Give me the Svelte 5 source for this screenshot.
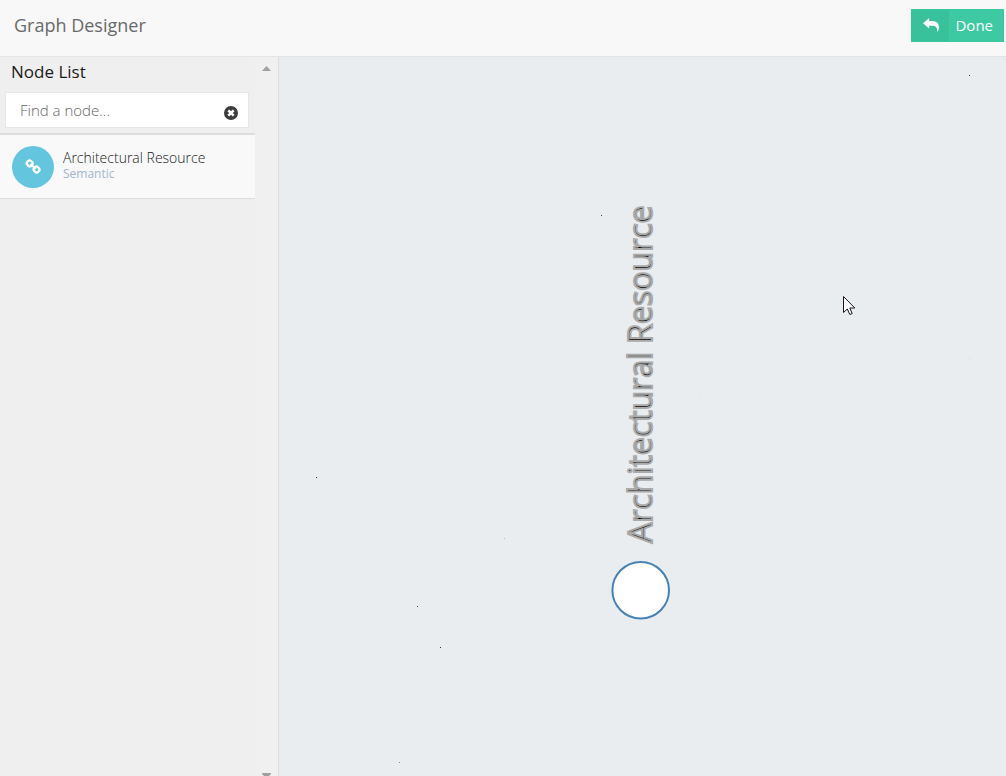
<script>
  const nodes = [{ title: 'Architectural Resource', kind: 'Semantic' }];
  const specks = [
    [690, 18, '#444'],
    [322, 158, '#444'],
    [37, 420, '#333'],
    [138, 549, '#444'],
    [161, 590, '#333'],
    [120, 705, '#888'],
    [225, 481, '#e8b870'],
    [690, 301, '#d9dcde'],
    [420, 336, '#d9dfe2'],
    [126, 125, '#d9dfe2'],
    [463, 709, '#d9dfe2']
  ];
  let query = $state('');
  const shown = $derived(nodes.filter((n) => n.title.toLowerCase().includes(query.toLowerCase())));
</script>

<div class="page">
  <header>
    <h1>Graph Designer</h1>
    <button class="done" type="button">
      <span class="done-icon">
        <svg width="16" height="14" viewBox="0 0 16 14" aria-hidden="true">
          <path fill="#fff" d="M0 5.200 6.200 0v3.100h2.600C13.400 3.100 16 5.300 16 9.200c0 1.700-.5 3.100-1.300 4.300-.3.400-.7.300-.6-.2.500-3.600-1.200-5.500-5.300-5.500H6.200v2.800z" />
        </svg>
      </span>
      <span class="done-text">Done</span>
    </button>
  </header>
  <main>
    <aside>
      <div class="list">
        <h2>Node List</h2>
        <div class="search">
          <input type="text" placeholder="Find a node..." aria-label="Find a node" bind:value={query} />
          <button class="clear" type="button" aria-label="Clear search" onclick={() => (query = '')}>
            <svg width="14" height="14" viewBox="0 0 14 14" aria-hidden="true">
              <circle cx="7" cy="7" r="7" fill="#3c3c3c" />
              <path d="M4.300 4.300l5.400 5.400m0-5.400l-5.400 5.400" stroke="#fff" stroke-width="2.600" />
            </svg>
          </button>
        </div>
        <ul>
          {#each shown as node}
            <li>
              <span class="badge">
                <svg width="16" height="16" viewBox="0 0 16 16" fill="none" stroke="#fff" stroke-width="2.300" aria-hidden="true">
                  <rect x="1.900" y="1.800" width="5.600" height="5.200" rx="2.300" transform="rotate(45 4.700 4.400)" />
                  <rect x="8.700" y="7.900" width="5.600" height="5.200" rx="2.300" transform="rotate(45 11.500 10.500)" />
                  <path d="M6 5.700l4.200 3.600" stroke-linecap="round" stroke-width="2" />
                </svg>
              </span>
              <span class="label">
                <span class="title">{node.title}</span>
                <span class="kind">{node.kind}</span>
              </span>
            </li>
          {/each}
        </ul>
      </div>
      <div class="scroll" aria-hidden="true">
        <svg width="9" height="5" viewBox="0 0 9 5"><path d="M0 5 4.500 0 9 5z" fill="#a0a0a0" /></svg>
        <svg class="down" width="9" height="5" viewBox="0 0 9 5"><path d="M0 0h9v1L5 5H4L0 1z" fill="#a0a0a0" /></svg>
      </div>
    </aside>
    <section class="canvas">
      <svg class="graph" role="img" aria-label="Graph">
        {#each specks as [x, y, color]}
          <rect {x} {y} width="1" height="1" fill={color} />
        {/each}
        <circle cx="361.700" cy="533.300" r="28.300" fill="#fff" stroke="#4682b4" stroke-width="2" />
        <text class="node-text" transform="translate(373 486) rotate(-90)">Architectural Resource</text>
        <path
          transform="translate(564 239)"
          d="M.5.500v16l3.800-3.500 2.500 5.500 2.400-1-2.400-5.500h5z"
          fill="#fff"
          stroke="#15151f"
          stroke-width="1"
        />
      </svg>
    </section>
  </main>
</div>

<style>
  :global(body) {
    margin: 0;
  }
  .page {
    display: flex;
    flex-direction: column;
    height: 100vh;
    overflow: hidden;
    font-family: 'Open Sans', sans-serif;
    color: #676a6c;
    background: #efefef;
  }
  header {
    display: flex;
    align-items: center;
    justify-content: space-between;
    box-sizing: border-box;
    height: 57px;
    padding: 0 2px 6px 14px;
    background: #f8f8f8;
    border-bottom: 1px solid #e5e5e5;
  }
  h1 {
    margin: 0;
    font-size: 18px;
    font-weight: 400;
    line-height: 24px;
  }
  button {
    font-family: inherit;
    border: 0;
    padding: 0;
    cursor: pointer;
  }
  .done {
    display: flex;
    height: 33px;
    border: 1px solid #37c89c;
    background: #3dcaa3;
    color: #fff;
    font-size: 15px;
  }
  .done-icon {
    display: flex;
    align-items: center;
    justify-content: center;
    width: 37px;
    height: 31px;
    background: #39c19b;
  }
  .done-text {
    padding: 0 10px 0 6px;
    line-height: 31px;
  }
  main {
    display: flex;
    flex: 1;
    min-height: 0;
  }
  aside {
    display: flex;
    box-sizing: border-box;
    width: 279px;
    flex: none;
    border-right: 1px solid #dcdcdc;
  }
  .list {
    flex: 1;
    min-width: 0;
  }
  h2 {
    margin: 0;
    padding: 3px 11px 8px;
    font-size: 17px;
    font-weight: 400;
    line-height: 24px;
    color: #1a1a1a;
  }
  .search {
    display: flex;
    align-items: center;
    box-sizing: border-box;
    height: 36px;
    margin: 0 6px 5px 5px;
    padding-right: 10px;
    background: #fff;
    border: 1px solid #e5e6e7;
  }
  input {
    flex: 1;
    min-width: 0;
    padding: 0 14px;
    border: 0;
    outline: 0;
    background: none;
    font: 300 15px 'Open Sans', sans-serif;
    color: #555;
  }
  input::placeholder {
    color: #666;
    opacity: 1;
  }
  .clear {
    display: flex;
    padding-top: 6px;
    background: none;
  }
  ul {
    margin: 0;
    padding: 0;
    list-style: none;
    border-top: 2px solid #dedede;
  }
  li {
    display: flex;
    align-items: center;
    gap: 9px;
    box-sizing: border-box;
    height: 64px;
    padding-left: 12px;
    background: #f9f9f9;
    border-bottom: 1px solid #dedede;
  }
  .badge {
    display: flex;
    align-items: center;
    justify-content: center;
    width: 42px;
    height: 42px;
    border-radius: 50%;
    background: #64c5df;
  }
  .label {
    display: flex;
    flex-direction: column;
    padding-bottom: 2px;
  }
  .title {
    font-size: 14px;
    font-weight: 300;
    line-height: 16px;
    color: #222;
  }
  .kind {
    font-size: 12px;
    line-height: 16px;
    color: #a3b5cc;
  }
  .scroll {
    display: flex;
    flex: none;
    flex-direction: column;
    justify-content: space-between;
    align-items: center;
    width: 23px;
    padding-top: 9px;
    background: #f0f0f0;
  }
  .down {
    margin-bottom: -2px;
  }
  .canvas {
    flex: 1;
    min-width: 0;
    background: #e9edf0;
  }
  .graph {
    display: block;
    width: 100%;
    height: 100%;
  }
  .node-text {
    font-size: 32px;
    fill: #000;
    stroke: #aaa;
    stroke-width: 2px;
  }
</style>
